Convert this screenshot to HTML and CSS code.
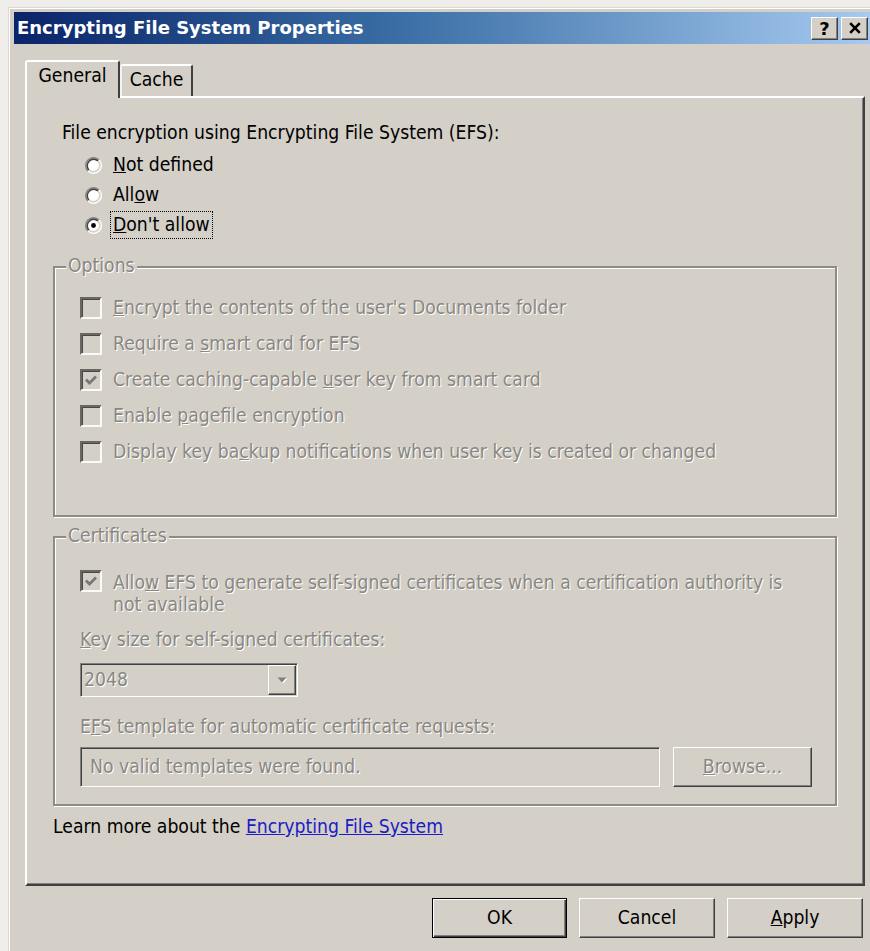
FILE: index.html
```html
<!DOCTYPE html>
<html lang="en">
<head>
<meta charset="utf-8">
<title>Encrypting File System Properties</title>
<link rel="stylesheet" href="styles.css">
</head>
<body>
<div class="window">
  <div class="titlebar">
    <span class="title">Encrypting File System Properties</span>
    <div class="caption-buttons">
      <span class="cap-btn help">?</span>
      <span class="cap-btn close">
        <svg viewBox="0 0 14 12" width="14" height="12"><path d="M2.2 1.2 L11.8 10.8 M11.8 1.2 L2.2 10.8" stroke="#000" stroke-width="2.6" fill="none"/></svg>
      </span>
    </div>
  </div>

  <div class="client">
    <div class="tabs">
      <div class="tab active">General</div>
      <div class="tab">Cache</div>
    </div>

    <div class="panel">
      <div class="heading">File encryption using Encrypting File System (EFS):</div>

      <div class="radios">
        <div class="radio-row">
          <svg class="radio" viewBox="0 0 12 12" width="17" height="17">
            <circle cx="6" cy="6" r="4.2" fill="#fff"/>
            <path d="M2.11 9.89 A5.5 5.5 0 0 1 9.89 2.11" stroke="#808080" fill="none"/>
            <path d="M2.82 9.18 A4.5 4.5 0 0 1 9.18 2.82" stroke="#404040" fill="none"/>
            <path d="M9.89 2.11 A5.5 5.5 0 0 1 2.11 9.89" stroke="#fff" fill="none"/>
            <path d="M9.18 2.82 A4.5 4.5 0 0 1 2.82 9.18" stroke="#d4d0c8" fill="none"/>
          </svg>
          <span class="radio-label"><u>N</u>ot defined</span>
        </div>
        <div class="radio-row">
          <svg class="radio" viewBox="0 0 12 12" width="17" height="17">
            <circle cx="6" cy="6" r="4.2" fill="#fff"/>
            <path d="M2.11 9.89 A5.5 5.5 0 0 1 9.89 2.11" stroke="#808080" fill="none"/>
            <path d="M2.82 9.18 A4.5 4.5 0 0 1 9.18 2.82" stroke="#404040" fill="none"/>
            <path d="M9.89 2.11 A5.5 5.5 0 0 1 2.11 9.89" stroke="#fff" fill="none"/>
            <path d="M9.18 2.82 A4.5 4.5 0 0 1 2.82 9.18" stroke="#d4d0c8" fill="none"/>
          </svg>
          <span class="radio-label">All<u>o</u>w</span>
        </div>
        <div class="radio-row">
          <svg class="radio" viewBox="0 0 12 12" width="17" height="17">
            <circle cx="6" cy="6" r="4.2" fill="#fff"/>
            <path d="M2.11 9.89 A5.5 5.5 0 0 1 9.89 2.11" stroke="#808080" fill="none"/>
            <path d="M2.82 9.18 A4.5 4.5 0 0 1 9.18 2.82" stroke="#404040" fill="none"/>
            <path d="M9.89 2.11 A5.5 5.5 0 0 1 2.11 9.89" stroke="#fff" fill="none"/>
            <path d="M9.18 2.82 A4.5 4.5 0 0 1 2.82 9.18" stroke="#d4d0c8" fill="none"/>
            <circle cx="6" cy="6" r="1.7" fill="#000"/>
          </svg>
          <span class="radio-label focused"><u>D</u>on't allow</span>
        </div>
      </div>

      <div class="group options">
        <span class="group-label disabled">Options</span>
        <div class="check-row disabled">
          <span class="checkbox"></span>
          <span><u>E</u>ncrypt the contents of the user's Documents folder</span>
        </div>
        <div class="check-row disabled">
          <span class="checkbox"></span>
          <span>Require a <u>s</u>mart card for EFS</span>
        </div>
        <div class="check-row disabled">
          <span class="checkbox"><svg viewBox="0 0 18 18" width="18" height="18"><path d="M4 8.5 L7.5 12 L14 5.5" stroke="#7a7772" stroke-width="2.8" fill="none"/></svg></span>
          <span>Create caching-capable <u>u</u>ser key from smart card</span>
        </div>
        <div class="check-row disabled">
          <span class="checkbox"></span>
          <span>Enable <u>p</u>agefile encryption</span>
        </div>
        <div class="check-row disabled">
          <span class="checkbox"></span>
          <span>Display key ba<u>c</u>kup notifications when user key is created or changed</span>
        </div>
      </div>

      <div class="group certs">
        <span class="group-label disabled">Certificates</span>
        <div class="check-row multi disabled">
          <span class="checkbox"><svg viewBox="0 0 18 18" width="18" height="18"><path d="M4 8.5 L7.5 12 L14 5.5" stroke="#7a7772" stroke-width="2.8" fill="none"/></svg></span>
          <span class="multi-text">Allo<u>w</u> EFS to generate self-signed certificates when a certification authority is<br>not available</span>
        </div>
        <div class="field-label disabled"><u>K</u>ey size for self-signed certificates:</div>
        <div class="combo">
          <span class="combo-text disabled">2048</span>
          <span class="combo-btn">
            <svg viewBox="0 0 10 6" width="10" height="6"><path d="M0.5 0.5 H9.5 L5 5.5 Z" fill="#808080"/></svg>
          </span>
        </div>
        <div class="field-label disabled template-label">E<u>F</u>S template for automatic certificate requests:</div>
        <div class="field-row">
          <div class="textbox disabled">No valid templates were found.</div>
          <div class="btn browse disabled"><u>B</u>rowse...</div>
        </div>
      </div>

      <div class="learn">Learn more about the <a href="#">Encrypting File System</a></div>
    </div>

    <div class="buttons">
      <div class="btn default">OK</div>
      <div class="btn">Cancel</div>
      <div class="btn"><u>A</u>pply</div>
    </div>
  </div>
</div>
</body>
</html>
```

FILE: styles.css
```css
* { box-sizing: border-box; }

html, body {
  margin: 0;
  padding: 0;
}

body {
  width: 870px;
  height: 951px;
  overflow: hidden;
  background: #efeeea;
  font-family: "DejaVu Sans Condensed", "DejaVu Sans", sans-serif;
  font-size: 19.2px;
  line-height: 22px;
  color: #000;
}

/* dialog frame */
.window {
  margin: 7px 0 0 8px;
  width: 862px;
  height: 960px;
  background: #d4d0c8;
  border-top: 1px solid #dcd9d2;
  border-left: 1px solid #dcd9d2;
  box-shadow: inset 1px 1px 0 #fff;
  padding: 4px 0 0 5px;
}

.titlebar {
  height: 32px;
  display: flex;
  align-items: center;
  justify-content: space-between;
  padding: 0 2px 0 3px;
  background: linear-gradient(to right, #0a246a 0%, #3a6ea5 45%, #a6caf0 100%);
}

.title {
  color: #fff;
  font-family: "DejaVu Sans", sans-serif;
  font-weight: bold;
  font-size: 18px;
  white-space: nowrap;
}

.caption-buttons {
  display: flex;
  gap: 3px;
}

.cap-btn {
  width: 27px;
  height: 23px;
  display: flex;
  align-items: center;
  justify-content: center;
  background: #d4d0c8;
  border: 1px solid;
  border-color: #fff #404040 #404040 #fff;
  box-shadow: inset -1px -1px 0 #808080;
}

.cap-btn.help {
  font-family: "DejaVu Sans", sans-serif;
  font-weight: bold;
  font-size: 18px;
  line-height: 1;
  padding-top: 1px;
}

/* client area */
.client {
  padding: 0 5px 0 11px;
}

.tabs {
  margin-top: 16px;
  height: 36px;
  display: flex;
  align-items: flex-end;
}

.tab {
  position: relative;
  height: 32px;
  padding-top: 3px;
  text-align: center;
  background: #d4d0c8;
  border-top: 2px solid #fff;
  border-left: 2px solid #fff;
  border-right: 2px solid #404040;
  border-radius: 3px 3px 0 0;
}

.tab.active {
  width: 95px;
  height: 38px;
  margin-bottom: -2px;
  z-index: 2;
}

.tab:not(.active) {
  width: 73px;
  border-left-color: #f4f3f0;
}

.panel {
  width: 840px;
  height: 790px;
  padding: 24px 26px 0 26px;
  border: 2px solid;
  border-color: #fff #404040 #404040 #fff;
  box-shadow: inset -1px -1px 0 #808080;
}

.heading {
  padding-left: 9px;
}

.radios {
  margin-top: 6px;
  padding-left: 32px;
}

.radio-row {
  height: 30px;
  display: flex;
  align-items: center;
  gap: 11px;
}

.radio { flex: none; }

.radio-label.focused {
  outline: 1px dotted #000;
  outline-offset: 2px;
}

/* disabled text is drawn embossed */
.disabled {
  color: #8a8782;
  text-shadow: 1px 1px 0 #fff;
}

/* etched group boxes */
.group {
  position: relative;
  border: 2px solid #8e8b85;
  box-shadow: 1px 1px 0 #fff, inset 1px 1px 0 #fff;
  padding-left: 25px;
}

.group-label {
  position: absolute;
  top: -13px;
  left: 11px;
  padding: 0 2px;
  background: #d4d0c8;
}

.options {
  margin-top: 26px;
  height: 251px;
  padding-top: 22px;
}

.certs {
  margin-top: 19px;
  height: 270px;
  padding-top: 32px;
}

.check-row {
  height: 36px;
  display: flex;
  align-items: center;
  gap: 11px;
  white-space: nowrap;
}

.check-row.multi {
  height: auto;
  align-items: flex-start;
}

.multi-text {
  padding-top: 2px;
}

.checkbox {
  flex: none;
  width: 22px;
  height: 22px;
  display: flex;
  align-items: center;
  justify-content: center;
  background: #d4d0c8;
  border: 2px solid;
  border-color: #6a6762 #fbfaf8 #fbfaf8 #6a6762;
  box-shadow: inset 1px 1px 0 #4a4844;
}

.field-label {
  margin-top: 13px;
}

.field-label.template-label {
  margin-top: 19px;
}

.combo {
  margin-top: 12px;
  width: 218px;
  height: 34px;
  display: flex;
  align-items: center;
  justify-content: space-between;
  padding: 0 1px 0 3px;
  border: 1px solid;
  border-color: #808080 #fff #fff #808080;
  box-shadow: inset 1px 1px 0 #404040, inset -1px -1px 0 #d4d0c8;
}

.combo-btn {
  width: 28px;
  height: 30px;
  display: flex;
  align-items: center;
  justify-content: center;
  border: 1px solid;
  border-color: #fff #404040 #404040 #fff;
  box-shadow: inset -1px -1px 0 #808080;
}

.combo-btn svg {
  filter: drop-shadow(1px 1px 0 #fff);
}

.field-row {
  margin-top: 9px;
  display: flex;
  gap: 13px;
}

.textbox {
  width: 580px;
  height: 40px;
  display: flex;
  align-items: center;
  padding-left: 9px;
  border: 1px solid;
  border-color: #808080 #fff #fff #808080;
  box-shadow: inset 1px 1px 0 #404040, inset -1px -1px 0 #d4d0c8;
}

.learn {
  margin-top: 10px;
}

.learn a {
  color: #1c1cc4;
  text-decoration: underline;
}

/* push buttons */
.btn {
  width: 136px;
  height: 40px;
  display: flex;
  align-items: center;
  justify-content: center;
  background: #d4d0c8;
  border: 1px solid;
  border-color: #fff #404040 #404040 #fff;
  box-shadow: inset -1px -1px 0 #808080;
}

.btn.browse {
  width: 139px;
}

.btn.default {
  width: 135px;
  border-color: #000;
  box-shadow: inset 1px 1px 0 #fff, inset -1px -1px 0 #404040, inset -2px -2px 0 #808080;
}

.buttons {
  margin-top: 12px;
  display: flex;
  justify-content: flex-end;
  gap: 12px;
  padding-right: 2px;
}
```
